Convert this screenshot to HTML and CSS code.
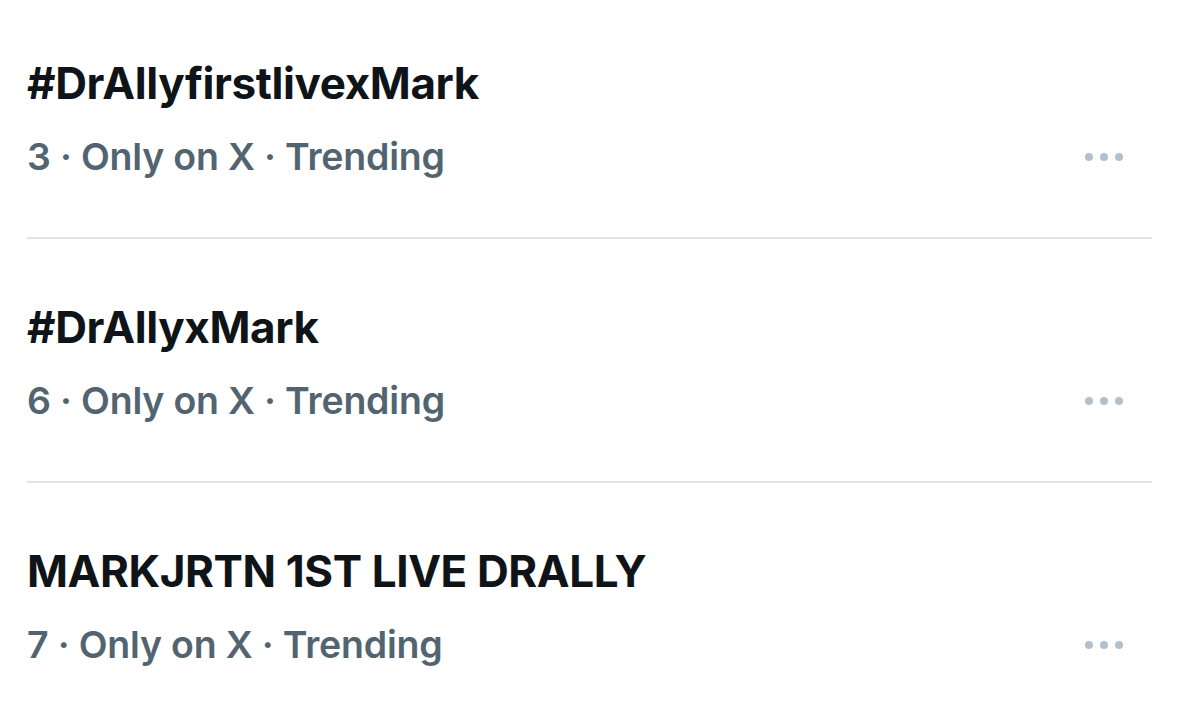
FILE: index.html
```html
<!DOCTYPE html>
<html>
<head>
<meta charset="utf-8">
<link rel="stylesheet" href="styles.css">
</head>
<body>
<div class="trends">
  <div class="trend">
    <div class="title">#DrAllyfirstlivexMark</div>
    <div class="meta-row">
      <div class="meta">3 · Only on X · Trending</div>
      <div class="more"><span></span><span></span><span></span></div>
    </div>
  </div>
  <div class="trend">
    <div class="title">#DrAllyxMark</div>
    <div class="meta-row">
      <div class="meta">6 · Only on X · Trending</div>
      <div class="more"><span></span><span></span><span></span></div>
    </div>
  </div>
  <div class="trend">
    <div class="title">MARKJRTN 1ST LIVE DRALLY</div>
    <div class="meta-row">
      <div class="meta">7 · Only on X · Trending</div>
      <div class="more"><span></span><span></span><span></span></div>
    </div>
  </div>
</div>
</body>
</html>
```

FILE: styles.css
```css
html, body {
  margin: 0;
  padding: 0;
  background: #ffffff;
}
body {
  font-family: Inter, "Noto Sans", sans-serif;
  width: 1178px;
  height: 726px;
  overflow: hidden;
}
.trends {
  padding: 0 26px 0 27px;
}
.trend {
  padding: 62px 0 58px;
  border-bottom: 2px solid #e1e3e5;
}
.trend:first-child {
  padding-top: 57px;
}
.trend:last-child {
  border-bottom: none;
}
.title {
  font-size: 44px;
  font-weight: 700;
  line-height: 52px;
  color: #0f1419;
  letter-spacing: -0.4px;
}
.meta-row {
  margin-top: 26px;
  display: flex;
  align-items: center;
  justify-content: space-between;
  height: 44px;
}
.meta {
  font-size: 37.5px;
  font-weight: 600;
  line-height: 44px;
  color: #536471;
  letter-spacing: -0.2px;
}
.more {
  display: flex;
  gap: 7px;
  margin-right: 29px;
}
.more span {
  width: 8px;
  height: 8px;
  border-radius: 50%;
  background: #b3c0cb;
}
```
